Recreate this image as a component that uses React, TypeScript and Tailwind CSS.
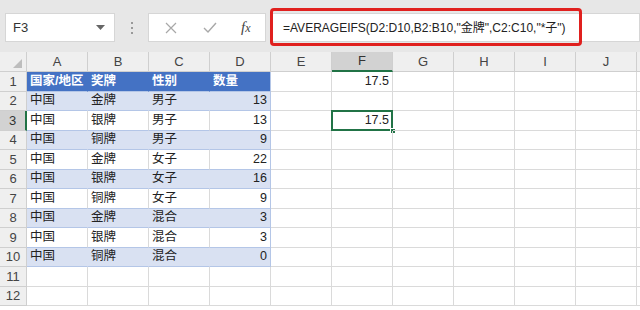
import React from 'react';

const font = { fontFamily: '"Liberation Sans", "Noto Sans CJK SC", sans-serif' };

const data: (string | number)[][] = [
  ['国家/地区', '奖牌', '性别', '数量'],
  ['中国', '金牌', '男子', 13],
  ['中国', '银牌', '男子', 13],
  ['中国', '铜牌', '男子', 9],
  ['中国', '金牌', '女子', 22],
  ['中国', '银牌', '女子', 16],
  ['中国', '铜牌', '女子', 9],
  ['中国', '金牌', '混合', 3],
  ['中国', '银牌', '混合', 3],
  ['中国', '铜牌', '混合', 0],
];

const cols = ['A', 'B', 'C', 'D', 'E', 'F', 'G', 'H', 'I', 'J', ''];

const Toolbar = () => (
  <div className="relative h-[52px] shrink-0 bg-[#e7e7e7] flex items-start pt-[13px] pl-[5px]">
    <div className="w-[110px] h-[29px] bg-white border border-[#d6d6d6] flex items-center justify-between px-[7px]">
      <span className="text-[13px] text-[#333]">F3</span>
      <svg width="9" height="5" viewBox="0 0 9 5" className="mr-[2px]">
        <path d="M0 0h9L4.5 5z" fill="#666" />
      </svg>
    </div>
    <div className="w-[33px] h-[29px] flex flex-col items-center justify-center gap-[3px]">
      <span className="w-[2px] h-[2px] bg-[#999]" />
      <span className="w-[2px] h-[2px] bg-[#999]" />
      <span className="w-[2px] h-[2px] bg-[#999]" />
    </div>
    <div className="w-[118px] h-[29px] bg-white border border-[#d6d6d6] flex items-center">
      <svg width="12" height="12" viewBox="0 0 12 12" className="ml-[16px]">
        <path d="M1 1l10 10M11 1L1 11" stroke="#a8a8a8" strokeWidth="1.2" />
      </svg>
      <svg width="14" height="11" viewBox="0 0 14 11" className="ml-[26px]">
        <path d="M1 6l4 4 8-9" stroke="#a8a8a8" strokeWidth="1.4" fill="none" />
      </svg>
      <span className="ml-[24px] text-[15px] italic text-[#444]" style={{ fontFamily: '"Liberation Serif", serif' }}>
        f<span className="text-[12px]">x</span>
      </span>
    </div>
    <div className="ml-[4px] flex-1 h-[29px] bg-white border border-[#d6d6d6] flex items-center pl-[12px]">
      <span className="text-[12px] text-[#222] whitespace-nowrap">=AVERAGEIFS(D2:D10,B2:B10,"金牌",C2:C10,"*子")</span>
    </div>
    <div className="absolute left-[270px] top-[8px] w-[312px] h-[38px] border-[3px] border-[#e0201e] rounded-[4px]" />
  </div>
);

const Sheet = () => {
  const rows = Array.from({ length: 12 }, (_, i) => i + 1);
  return (
    <div className="grid grid-cols-[27px_repeat(10,61px)_1fr] bg-white">
      <div className="h-[20px] bg-[#efefef] border-r border-b border-[#cfcfcf] relative">
        <svg width="9" height="9" viewBox="0 0 9 9" className="absolute right-[4px] bottom-[3px]">
          <path d="M9 0v9H0z" fill="#bdbdbd" />
        </svg>
      </div>
      {cols.map((c, i) => (
        <div
          key={i}
          className={
            c === 'F'
              ? 'h-[20px] bg-[#d2d2d2] border-r border-[#cfcfcf] border-b-2 border-b-[#217346] flex items-center justify-center text-[13px] text-[#333]'
              : 'h-[20px] bg-[#efefef] border-r border-b border-[#cfcfcf] flex items-center justify-center text-[13px] text-[#444]'
          }
        >
          {c}
        </div>
      ))}
      {rows.map((r) => {
        const d = data[r - 1];
        const band = r % 2 === 0 && r <= 10;
        return (
          <React.Fragment key={r}>
            <div
              className={
                r === 3
                  ? 'h-[19.5px] bg-[#d2d2d2] border-b border-[#cfcfcf] border-r-2 border-r-[#217346] flex items-center justify-center text-[13px] text-[#333]'
                  : 'h-[19.5px] bg-[#efefef] border-r border-b border-[#cfcfcf] flex items-center justify-center text-[13px] text-[#444]'
              }
            >
              {r}
            </div>
            {cols.map((c, ci) => {
              if (d && ci < 4) {
                const v = d[ci];
                const isHead = r === 1;
                const bg = isHead ? 'bg-[#4472c4]' : band ? 'bg-[#d9e1f2]' : 'bg-white';
                const right =
                  ci === 3
                    ? 'border-r border-r-[#b4c6e7]'
                    : isHead || band
                      ? 'border-r border-r-transparent'
                      : 'border-r border-r-[#dadada]';
                return (
                  <div
                    key={ci}
                    className={`h-[19.5px] ${bg} ${right} border-b border-b-[#b4c6e7] flex items-center px-[3px] whitespace-nowrap text-[12.5px] ${
                      isHead ? 'text-white font-bold' : 'text-[#222]'
                    } ${typeof v === 'number' ? 'justify-end' : ''}`}
                  >
                    {v}
                  </div>
                );
              }
              const sel = c === 'F' && r === 3;
              const val = c === 'F' && (r === 1 || r === 3) ? '17.5' : '';
              return (
                <div
                  key={ci}
                  className="relative h-[19.5px] border-r border-b border-[#dadada] flex items-center justify-end px-[3px] text-[12.5px] text-[#222]"
                >
                  {val}
                  {sel && (
                    <>
                      <div className="absolute -left-px -top-px right-[-1px] bottom-[-1px] border-2 border-[#217346]" />
                      <div className="absolute right-[-4px] bottom-[-4px] w-[6px] h-[6px] bg-[#217346] border border-white" />
                    </>
                  )}
                </div>
              );
            })}
          </React.Fragment>
        );
      })}
    </div>
  );
}

export default function App() {
  return (
    <div className="w-[640px] h-[310px] overflow-hidden bg-white flex flex-col" style={font}>
      <Toolbar />
      <Sheet />
    </div>
  );
}
